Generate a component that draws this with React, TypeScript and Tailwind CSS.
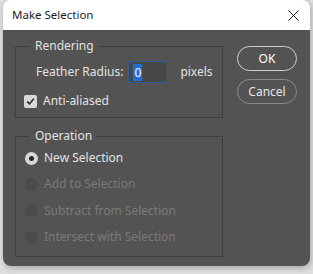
import React from "react";

const options = [
	{ label: "New Selection", enabled: true },
	{ label: "Add to Selection", enabled: false },
	{ label: "Subtract from Selection", enabled: false },
	{ label: "Intersect with Selection", enabled: false },
];

const App = () => {
	return (
		<div className="w-[313px] h-[274px] bg-[#dedede] px-[3px] font-['Noto_Sans','Open_Sans',sans-serif]">
			<div className="w-[307px] h-[266px] rounded-[8px] overflow-hidden shadow-[1px_2px_6px_rgba(0,0,0,0.25)]">
				{/* title bar */}
				<div className="h-[30px] bg-white flex items-center justify-between pl-[9px] pr-[11px]">
					<span className="text-[11.5px] text-[#1b1b1b] leading-none">Make Selection</span>
					<svg width="11" height="11" viewBox="0 0 11 11">
						<path d="M0.5 0.5 L10.5 10.5 M10.5 0.5 L0.5 10.5" stroke="#1b1b1b" strokeWidth="1" />
					</svg>
				</div>

				{/* body */}
				<div className="h-[236px] bg-[#535353] flex pl-[12px] pt-[8px] text-[12px] text-[#e2e2e2]">
					<div className="w-[208px] flex flex-col">
						<fieldset className="h-[80px] border border-[#3e3e3e]">
							<legend className="ml-[14px] px-[5px] leading-[16px]">Rendering</legend>
							<div className="flex items-center h-[22px] mt-[7px] pl-[20px]">
								<span>Feather Radius:</span>
								<div className="ml-[5px] w-[40px] h-[22px] border border-[#2e5d9c] bg-[#484848] flex items-center pl-[4px]">
									<span className="bg-[#1f6fd6] text-white leading-[17px] px-[1px]">0</span>
								</div>
								<span className="ml-[12px]">pixels</span>
							</div>
							<div className="flex items-center h-[16px] mt-[10px] pl-[8px]">
								<div className="w-[13px] h-[13px] rounded-[2px] bg-[#d8d8d8] flex items-center justify-center">
									<svg width="9" height="9" viewBox="0 0 9 9">
										<path d="M1.2 4.6 L3.5 6.9 L7.8 1.8" fill="none" stroke="#2b2b2b" strokeWidth="1.6" />
									</svg>
								</div>
								<span className="ml-[6px]">Anti-aliased</span>
							</div>
						</fieldset>

						<fieldset className="h-[129px] mt-[10px] border border-[#3e3e3e]">
							<legend className="ml-[14px] px-[5px] leading-[16px]">Operation</legend>
							<div className="mt-[1px] pl-[9px] flex flex-col">
								{options.map((o, i) => (
									<div key={i} className="flex items-center h-[26.3px]">
										{o.enabled ? (
											<div className="w-[13px] h-[13px] rounded-full bg-[#d8d8d8] flex items-center justify-center">
												<div className="w-[5px] h-[5px] rounded-full bg-[#262626]" />
											</div>
										) : (
											<div className="w-[13px] h-[13px] rounded-full bg-[#4b4b4b]" />
										)}
										<span className={"ml-[6px] " + (o.enabled ? "text-[#e2e2e2]" : "text-[#7a7a7a]")}>
											{o.label}
										</span>
									</div>
								))}
							</div>
						</fieldset>
					</div>

					<div className="ml-[14px] mt-[8px] flex flex-col gap-[8px]">
						<button className="w-[60px] h-[25px] rounded-full border-[1.5px] border-[#cfcfcf] text-white text-[12px]">
							OK
						</button>
						<button className="w-[60px] h-[25px] rounded-full border border-[#8a8a8a] text-[#e6e6e6] text-[12px]">
							Cancel
						</button>
					</div>
				</div>
			</div>
		</div>
	);
};

export default App;
